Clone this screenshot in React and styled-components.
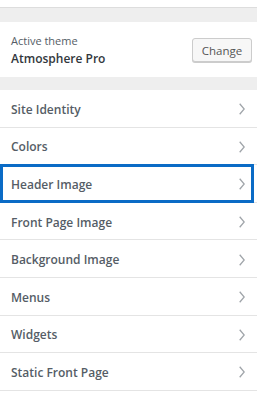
import React from 'react';
import styled, { createGlobalStyle } from 'styled-components';

const GlobalStyle = createGlobalStyle`
    html, body {
        margin: 0;
        padding: 0;
        background: #eeeeee;
    }
    body {
        font-family: "Open Sans", "Noto Sans", "Liberation Sans", sans-serif;
    }
`;

const Sidebar = styled.div`
    width: 257px;
    height: 400px;
    background: #eeeeee;
    display: flex;
    flex-direction: column;
    overflow: hidden;
`;

const TopStrip = styled.div`
    height: 7px;
    flex-shrink: 0;
    background: #ffffff;
    border-bottom: 1px solid #dddddd;
`;

const ThemePanel = styled.div`
    margin-top: 14px;
    height: 55px;
    flex-shrink: 0;
    background: #ffffff;
    display: flex;
    align-items: center;
    justify-content: space-between;
    padding: 0 5px 0 11px;
    box-sizing: border-box;
`;

const ThemeInfo = styled.div`
    display: flex;
    flex-direction: column;
    padding-top: 1px;
`;

const Caption = styled.span`
    font-size: 11px;
    line-height: 18px;
    color: #555d66;
`;

const ThemeName = styled.span`
    font-size: 12px;
    font-weight: 600;
    line-height: 18px;
    color: #32373c;
`;

const ChangeButton = styled.button`
    width: 60px;
    height: 24px;
    margin-top: 1px;
    padding: 0;
    font-family: inherit;
    font-size: 11.5px;
    color: #555555;
    background: #f7f7f7;
    border: 1px solid #cccccc;
    border-radius: 3px;
    box-shadow: 0 1px 0 #cccccc;
    cursor: pointer;
`;

const SectionList = styled.ul`
    list-style: none;
    margin: 13px 0 0;
    padding: 0;
    flex: 1;
    background: #ffffff;
`;

const SectionRow = styled.li`
    position: relative;
    height: 37.6px;
    box-sizing: border-box;
    border-bottom: 1px solid #e4e4e4;
    display: flex;
    align-items: center;
    justify-content: space-between;
    padding: 2px 12px 0 11px;
    font-size: 12px;
    font-weight: 600;
    color: #555d66;

    &::after {
        content: '';
        display: ${props => (props.$focused ? 'block' : 'none')};
        position: absolute;
        top: -1px;
        bottom: -1px;
        left: 0;
        right: 3px;
        border: 3px solid #0a6bc6;
    }
`;

const Chevron = () => (
    <svg width="6" height="12" viewBox="0 0 6 12">
        <polyline points="0.7,0.8 5.2,6 0.7,11.2" fill="none" stroke="#a0a5aa" strokeWidth="1.3" />
    </svg>
);

const sections = [
    'Site Identity',
    'Colors',
    'Header Image',
    'Front Page Image',
    'Background Image',
    'Menus',
    'Widgets',
    'Static Front Page',
];

const App = () => {
    return (
        <>
            <GlobalStyle />
            <Sidebar>
                <TopStrip />
                <ThemePanel>
                    <ThemeInfo>
                        <Caption>Active theme</Caption>
                        <ThemeName>Atmosphere Pro</ThemeName>
                    </ThemeInfo>
                    <ChangeButton>Change</ChangeButton>
                </ThemePanel>
                <SectionList>
                    {sections.map(title => (
                        <SectionRow key={title} $focused={title === 'Header Image'}>
                            {title}
                            <Chevron />
                        </SectionRow>
                    ))}
                </SectionList>
            </Sidebar>
        </>
    );
};

export default App;
